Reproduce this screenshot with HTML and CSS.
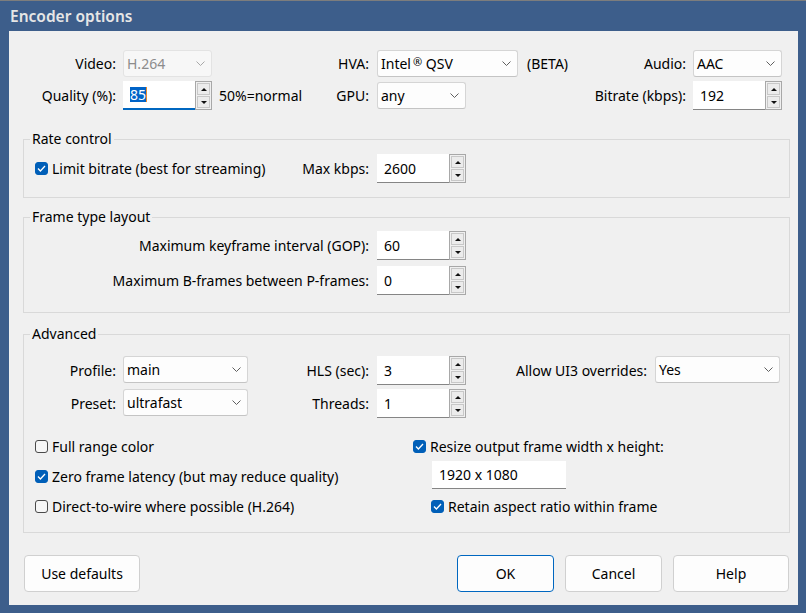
FILE: index.html
```html
<!DOCTYPE html>
<html lang="en">
<head>
<meta charset="utf-8">
<title>Encoder options</title>
<link rel="stylesheet" href="styles.css">
</head>
<body>
<div class="window">
  <div class="titlebar">Encoder options</div>
  <div class="client">

    <div class="top-grid">
      <span class="lbl">Video:</span>
      <div class="combo disabled w89 c-end"><span class="val">H.264</span><svg class="chev" width="9" height="5" viewBox="0 0 9 5"><path d="M0.5 0.5 L4.5 4.5 L8.5 0.5"/></svg></div>
      <span></span>
      <span class="lbl">HVA:</span>
      <div class="combo w141 c-start"><span class="val">Intel<sup class="reg">®</sup> QSV</span><svg class="chev" width="9" height="5" viewBox="0 0 9 5"><path d="M0.5 0.5 L4.5 4.5 L8.5 0.5"/></svg></div>
      <div class="fcell"><span class="beta">(BETA)</span><span class="lbl">Audio:</span></div>
      <div class="combo w89 c-end"><span class="val">AAC</span><svg class="chev" width="9" height="5" viewBox="0 0 9 5"><path d="M0.5 0.5 L4.5 4.5 L8.5 0.5"/></svg></div>

      <span class="lbl">Quality (%):</span>
      <div class="spin c-end"><div class="field focused"><span class="sel">85</span></div><div class="spinbtns"><div class="sb"><i class="up"></i></div><div class="sb"><i class="down"></i></div></div></div>
      <span class="note">50%=normal</span>
      <span class="lbl">GPU:</span>
      <div class="combo w89 c-start"><span class="val">any</span><svg class="chev" width="9" height="5" viewBox="0 0 9 5"><path d="M0.5 0.5 L4.5 4.5 L8.5 0.5"/></svg></div>
      <span class="lbl">Bitrate (kbps):</span>
      <div class="spin c-end"><div class="field">192</div><div class="spinbtns"><div class="sb"><i class="up"></i></div><div class="sb"><i class="down"></i></div></div></div>
    </div>

    <fieldset class="group rate">
      <legend>Rate control</legend>
      <div class="rate-grid">
        <div class="check"><span class="box on"><svg width="9" height="7" viewBox="0 0 9 7"><path d="M1 3.5 L3.4 6 L8 1"/></svg></span><span>Limit bitrate (best for streaming)</span></div>
        <span class="lbl">Max kbps:</span>
        <div class="spin c-end"><div class="field">2600</div><div class="spinbtns"><div class="sb"><i class="up"></i></div><div class="sb"><i class="down"></i></div></div></div>
      </div>
    </fieldset>

    <fieldset class="group frame">
      <legend>Frame type layout</legend>
      <div class="frame-grid">
        <span class="lbl">Maximum keyframe interval (GOP):</span>
        <div class="spin c-end"><div class="field">60</div><div class="spinbtns"><div class="sb"><i class="up"></i></div><div class="sb"><i class="down"></i></div></div></div>
        <span class="lbl">Maximum B-frames between P-frames:</span>
        <div class="spin c-end"><div class="field">0</div><div class="spinbtns"><div class="sb"><i class="up"></i></div><div class="sb"><i class="down"></i></div></div></div>
      </div>
    </fieldset>

    <fieldset class="group adv">
      <legend>Advanced</legend>
      <div class="adv-grid">
        <span class="lbl">Profile:</span>
        <div class="combo w125 c-end top"><span class="val">main</span><svg class="chev" width="9" height="5" viewBox="0 0 9 5"><path d="M0.5 0.5 L4.5 4.5 L8.5 0.5"/></svg></div>
        <span class="lbl">HLS (sec):</span>
        <div class="spin c-end"><div class="field">3</div><div class="spinbtns"><div class="sb"><i class="up"></i></div><div class="sb"><i class="down"></i></div></div></div>
        <span class="lbl">Allow UI3 overrides:</span>
        <div class="combo w125 c-end top"><span class="val">Yes</span><svg class="chev" width="9" height="5" viewBox="0 0 9 5"><path d="M0.5 0.5 L4.5 4.5 L8.5 0.5"/></svg></div>

        <span class="lbl">Preset:</span>
        <div class="combo w125 c-end top"><span class="val">ultrafast</span><svg class="chev" width="9" height="5" viewBox="0 0 9 5"><path d="M0.5 0.5 L4.5 4.5 L8.5 0.5"/></svg></div>
        <span class="lbl">Threads:</span>
        <div class="spin c-end"><div class="field">1</div><div class="spinbtns"><div class="sb"><i class="up"></i></div><div class="sb"><i class="down"></i></div></div></div>
        <span></span>
        <span></span>
      </div>

      <div class="adv-lower">
        <div class="col">
          <div class="check"><span class="box"></span><span>Full range color</span></div>
          <div class="check"><span class="box on"><svg width="9" height="7" viewBox="0 0 9 7"><path d="M1 3.5 L3.4 6 L8 1"/></svg></span><span>Zero frame latency (but may reduce quality)</span></div>
          <div class="check"><span class="box"></span><span>Direct-to-wire where possible (H.264)</span></div>
        </div>
        <div class="col right">
          <div class="check"><span class="box on"><svg width="9" height="7" viewBox="0 0 9 7"><path d="M1 3.5 L3.4 6 L8 1"/></svg></span><span>Resize output frame width x height:</span></div>
          <div class="textbox">1920 x 1080</div>
          <div class="check retain"><span class="box on"><svg width="9" height="7" viewBox="0 0 9 7"><path d="M1 3.5 L3.4 6 L8 1"/></svg></span><span>Retain aspect ratio within frame</span></div>
        </div>
      </div>
    </fieldset>

    <div class="buttons">
      <button class="btn wide">Use defaults</button>
      <div class="btn-group">
        <button class="btn default">OK</button>
        <button class="btn">Cancel</button>
        <button class="btn wide">Help</button>
      </div>
    </div>

  </div>
</div>
</body>
</html>
```

FILE: styles.css
```css
* { box-sizing: border-box; }
html, body { margin: 0; padding: 0; }
body {
  width: 806px;
  height: 613px;
  overflow: hidden;
  font-family: "Noto Sans", "Liberation Sans", sans-serif;
  font-size: 14px;
  color: #000;
  background: #3d5e8b;
}
.window {
  width: 806px;
  height: 613px;
  background: #3d5e8b;
  border-top: 1px solid #7d7d7d;
  display: flex;
  flex-direction: column;
}
.titlebar {
  height: 30px;
  line-height: 30px;
  padding-left: 10px;
  color: #e6e6e6;
  font-weight: 600;
  font-size: 15.5px;
}
.client {
  margin: 0 8px 0 9px;
  height: 574px;
  background: #f0f0f0;
  display: flex;
  flex-direction: column;
}

.lbl { justify-self: end; white-space: nowrap; }
.c-end { justify-self: end; }
.c-start { justify-self: start; margin-left: 8px; }
.top { align-self: start; }

/* top grid */
.top-grid {
  margin-top: 19px;
  display: grid;
  grid-template-columns: 107px 96px 98px 59px 149px 168px 96px;
  grid-template-rows: 27px 29px;
  row-gap: 4px;
  align-items: center;
}
.fcell { display: flex; justify-content: space-between; padding-left: 9px; }
.note { padding-left: 7px; white-space: nowrap; }
.reg { font-size: 11px; vertical-align: 3px; line-height: 0; margin-left: 2px; }

/* combo */
.combo {
  height: 27px;
  background: #fdfdfd;
  border: 1px solid #d5d5d5;
  border-bottom-color: #c4c4c4;
  border-radius: 3px;
  display: flex;
  align-items: center;
  padding-left: 3px;
}
.combo .val { flex: 1; white-space: nowrap; }
.combo .chev { margin-right: 6px; }
.combo .chev path { fill: none; stroke: #5f5f5f; stroke-width: 1; }
.combo.disabled { background: #f7f7f7; border-color: #e3e3e3; color: #8c8c8c; }
.combo.disabled .chev path { stroke: #a8a8a8; }
.w89 { width: 89px; }
.w125 { width: 125px; }
.w141 { width: 141px; }

/* spin */
.spin { width: 89px; height: 29px; display: flex; }
.field {
  flex: 1;
  background: #fff;
  border-bottom: 1px solid #858585;
  padding-left: 7px;
  display: flex;
  align-items: center;
}
.field.focused { border-bottom: 2px solid #0067c0; }
.sel {
  background: #0063c7;
  color: #fff;
  border-right: 1px solid #e8892c;
  line-height: 15px;
}
.spinbtns {
  width: 17px;
  border: 1px solid #a8a8a8;
  padding: 1px;
  display: flex;
  flex-direction: column;
  gap: 1px;
}
.sb {
  flex: 1;
  background: #ececec;
  border: 1px solid #c8c8c8;
  display: flex;
  align-items: center;
  justify-content: center;
}
.up, .down { width: 0; height: 0; border-left: 3px solid transparent; border-right: 3px solid transparent; }
.up { border-bottom: 3px solid #111; }
.down { border-top: 3px solid #111; }

/* groups */
.group {
  margin: 0 8px 0 14px;
  border: 1px solid #d9d9d9;
  padding: 0 0 0 11px;
  min-width: 0;
}
.group legend {
  margin-left: -5px;
  padding: 0 2px;
  line-height: 20px;
  font-size: 14px;
}
.rate { margin-top: 19px; padding-top: 5px; padding-bottom: 14px; }
.frame { margin-top: 9px; padding-top: 4px; padding-bottom: 17px; }
.adv { margin-top: 11px; padding-top: 12px; padding-bottom: 16px; }

.rate-grid {
  display: grid;
  grid-template-columns: 240px 94px 97px;
  grid-template-rows: 29px;
  align-items: center;
}
.frame-grid {
  display: grid;
  grid-template-columns: 334px 97px;
  grid-template-rows: 29px 29px;
  row-gap: 6px;
  align-items: center;
}
.adv-grid {
  display: grid;
  grid-template-columns: 81px 132px 121px 97px 181px 133px;
  grid-template-rows: 29px 29px;
  row-gap: 4px;
  align-items: center;
}

/* checkboxes */
.check { display: flex; align-items: center; gap: 4px; height: 20px; white-space: nowrap; }
.box {
  width: 13px;
  height: 13px;
  border: 1px solid #4a4a4a;
  border-radius: 3px;
  background: #f6f6f6;
  display: flex;
  align-items: center;
  justify-content: center;
  flex: none;
}
.box.on { background: #005fb8; border-color: #005fb8; }
.box svg path { fill: none; stroke: #fff; stroke-width: 1.3; }

.adv-lower {
  margin-top: 18px;
  display: grid;
  grid-template-columns: 378px 1fr;
}
.col { display: flex; flex-direction: column; gap: 10px; }
.col.right { gap: 0; }
.textbox {
  margin: 5px 0 7px 19px;
  width: 134px;
  height: 28px;
  background: #fff;
  border-bottom: 1px solid #858585;
  padding-left: 7px;
  display: flex;
  align-items: center;
}
.retain { margin-left: 18px; }

/* buttons */
.buttons {
  margin: 22px 9px 0 15px;
  display: flex;
  justify-content: space-between;
}
.btn-group { display: flex; gap: 11px; }
.btn {
  width: 97px;
  height: 37px;
  border: 1px solid #d0d0d0;
  border-radius: 4px;
  background: #fdfdfd;
  font-family: inherit;
  font-size: 14px;
  color: #000;
  padding: 0;
}
.btn.wide { width: 116px; }
.btn.default { border-color: #0067c0; }
```
